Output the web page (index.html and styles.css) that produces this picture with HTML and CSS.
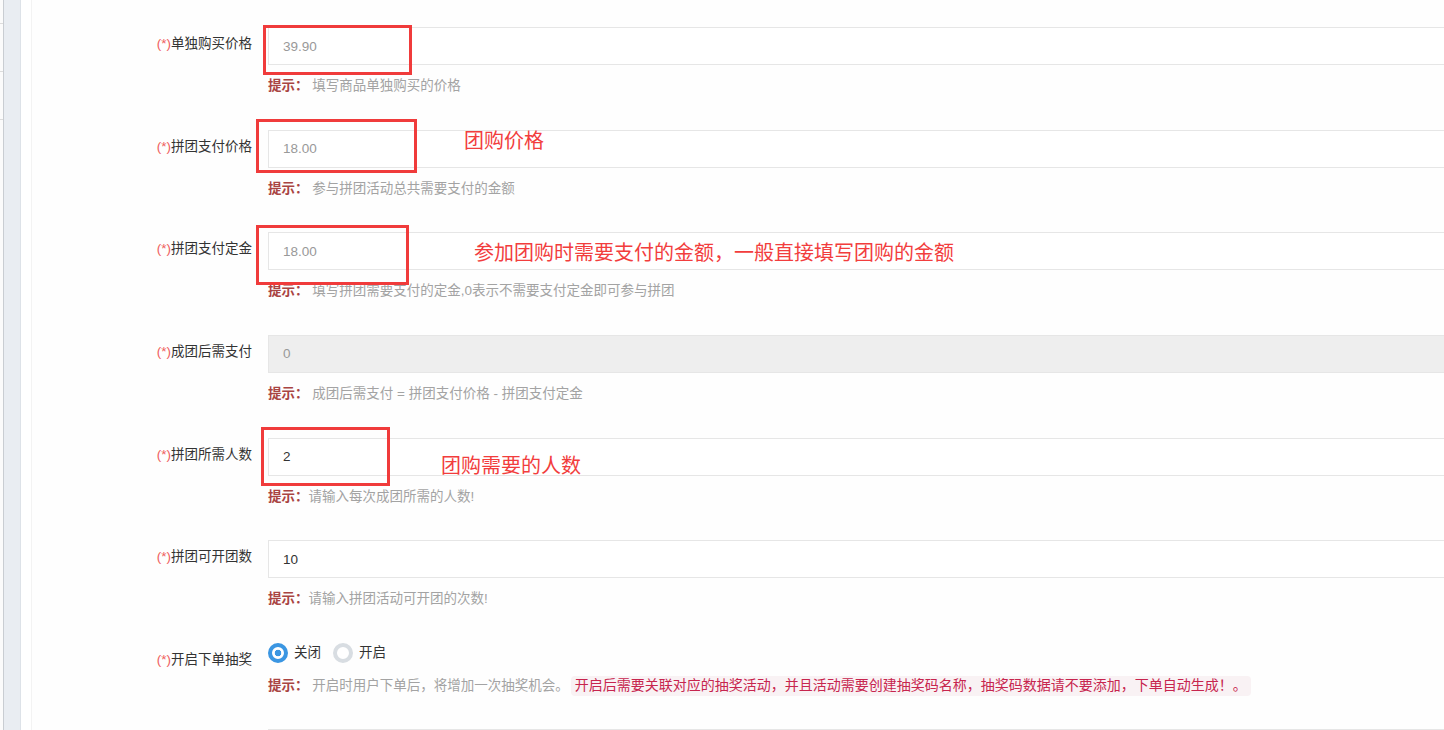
FILE: index.html
```html
<!DOCTYPE html>
<html lang="zh-CN">
<head>
<meta charset="utf-8">
<title>拼团设置</title>
<link rel="stylesheet" href="styles.css">
</head>
<body>
<div class="page">
  <div class="menu">
    <div class="menu-item first"></div>
    <div class="menu-item"></div>
    <div class="menu-item"></div>
  </div>
  <div class="gutter"></div>
  <div class="panel">
    <form class="form">
      <div class="row">
        <label class="label"><span class="req">(*)</span>单独购买价格</label>
        <div class="field">
          <input class="input muted" type="text" value="39.90">
          <p class="hint"><b class="tip">提示：</b> 填写商品单独购买的价格</p>
        </div>
      </div>
      <div class="row">
        <label class="label"><span class="req">(*)</span>拼团支付价格</label>
        <div class="field">
          <input class="input muted" type="text" value="18.00">
          <p class="hint"><b class="tip">提示：</b> 参与拼团活动总共需要支付的金额</p>
        </div>
      </div>
      <div class="row">
        <label class="label"><span class="req">(*)</span>拼团支付定金</label>
        <div class="field">
          <input class="input muted" type="text" value="18.00">
          <p class="hint"><b class="tip">提示：</b> 填写拼团需要支付的定金,0表示不需要支付定金即可参与拼团</p>
        </div>
      </div>
      <div class="row">
        <label class="label"><span class="req">(*)</span>成团后需支付</label>
        <div class="field">
          <input class="input muted disabled" type="text" value="0" disabled>
          <p class="hint"><b class="tip">提示：</b> 成团后需支付 = 拼团支付价格 - 拼团支付定金</p>
        </div>
      </div>
      <div class="row">
        <label class="label"><span class="req">(*)</span>拼团所需人数</label>
        <div class="field">
          <input class="input" type="text" value="2">
          <p class="hint"><b class="tip">提示：</b>请输入每次成团所需的人数!</p>
        </div>
      </div>
      <div class="row">
        <label class="label"><span class="req">(*)</span>拼团可开团数</label>
        <div class="field">
          <input class="input" type="text" value="10">
          <p class="hint"><b class="tip">提示：</b>请输入拼团活动可开团的次数!</p>
        </div>
      </div>
      <div class="row row-radio">
        <label class="label"><span class="req">(*)</span>开启下单抽奖</label>
        <div class="field">
          <div class="radios">
            <span class="radio on"></span><span class="radio-text">关闭</span>
            <span class="radio off"></span><span class="radio-text">开启</span>
          </div>
          <p class="hint hint-radio"><b class="tip">提示：</b> 开启时用户下单后，将增加一次抽奖机会。<code class="code">开启后需要关联对应的抽奖活动，并且活动需要创建抽奖码名称，抽奖码数据请不要添加，下单自动生成！。</code></p>
        </div>
      </div>
      <div class="row">
        <label class="label"></label>
        <div class="field">
          <input class="input" type="text" value="">
        </div>
      </div>
    </form>
  </div>

  <div class="mark box1"></div>
  <div class="mark box2"></div>
  <div class="mark box3"></div>
  <div class="mark box4"></div>
  <div class="note note1">团购价格</div>
  <div class="note note2">参加团购时需要支付的金额，一般直接填写团购的金额</div>
  <div class="note note3">团购需要的人数</div>
</div>
</body>
</html>
```
FILE: styles.css
```css
* { box-sizing: border-box; }
html, body { margin: 0; padding: 0; background: #fff; }
body {
  font-family: "Liberation Sans", "Noto Sans CJK SC", sans-serif;
  color: #333;
}
.page {
  position: relative;
  display: flex;
  width: 1444px;
  height: 730px;
  overflow: hidden;
}
.menu {
  width: 4px;
  flex: 0 0 4px;
  background: #fbfbfb;
  border-right: 1px solid #c9cdd2;
}
.menu-item {
  height: 48px;
  border-bottom: 1px solid #dcdcdc;
}
.menu-item.first { height: 24px; }
.gutter {
  flex: 0 0 17px;
  background: #e9edf2;
  border-right: 1px solid #dde2e8;
}
.panel {
  flex: 1;
  margin-left: 10px;
  border-left: 1px solid #f3f3f3;
  padding-top: 27px;
  overflow: hidden;
  background: #fefefe;
}
.form { margin: 0; }
.row {
  display: flex;
  margin-bottom: 32.67px;
}
.row-radio { margin-bottom: 32px; }
.label {
  flex: 0 0 220px;
  width: 220px;
  text-align: right;
  padding-top: 7px;
  line-height: 20px;
  font-size: 13.5px;
  color: #333;
  margin-right: 16px;
}
.req { color: #ef5d5d; }
.field { flex: 0 0 1250px; }
.input {
  display: block;
  width: 100%;
  height: 38px;
  margin: 0;
  border: 1px solid #e6e6e6;
  border-radius: 0;
  padding: 0 14px;
  font-family: "Liberation Sans", "Noto Sans CJK SC", sans-serif;
  font-size: 13.5px;
  color: #333;
  background: #fff;
  outline: none;
}
.input.muted { color: #999; }
.input.disabled { background: #eee; border-color: #e6e6e6; -webkit-text-fill-color: #999; opacity: 1; }
.hint {
  margin: 10px 0 0;
  line-height: 22px;
  height: 22px;
  font-size: 13.5px;
  color: #a3a3a3;
  white-space: nowrap;
}
.tip { color: #a94442; font-weight: bold; }
.hint-radio { margin-top: 12px; }
.radios {
  display: flex;
  align-items: center;
  height: 20px;
  font-size: 13.5px;
  color: #333;
}
.radio {
  width: 20px;
  height: 20px;
  border-radius: 50%;
  background: #fff;
}
.radio.on {
  border: 4px solid #3b96e2;
  background: radial-gradient(circle, #3b96e2 0 3px, #fff 3.6px);
}
.radio.off {
  border: 4px solid #d8dde2;
  margin-left: 12px;
}
.radio-text { margin-left: 6px; line-height: 20px; }
.code {
  font-family: "Liberation Mono", "Noto Sans CJK SC", monospace;
  font-size: 14px;
  color: #c7254e;
  background: #f9f2f4;
  border-radius: 4px;
  padding: 2px 4px;
  margin-left: 2px;
}
.mark {
  position: absolute;
  border: 3px solid #f03b3b;
}
.box1 { left: 263px; top: 25px; width: 149px; height: 50px; }
.box2 { left: 256px; top: 119px; width: 161px; height: 54px; }
.box3 { left: 256px; top: 225px; width: 153px; height: 60px; }
.box4 { left: 261px; top: 427px; width: 129px; height: 59px; }
.note {
  position: absolute;
  font-family: "Noto Sans CJK SC", sans-serif;
  font-size: 20px;
  line-height: 24px;
  color: #f23d3d;
  white-space: nowrap;
}
.note1 { left: 464px; top: 128px; }
.note2 { left: 474px; top: 240px; }
.note3 { left: 441px; top: 453px; }
```
